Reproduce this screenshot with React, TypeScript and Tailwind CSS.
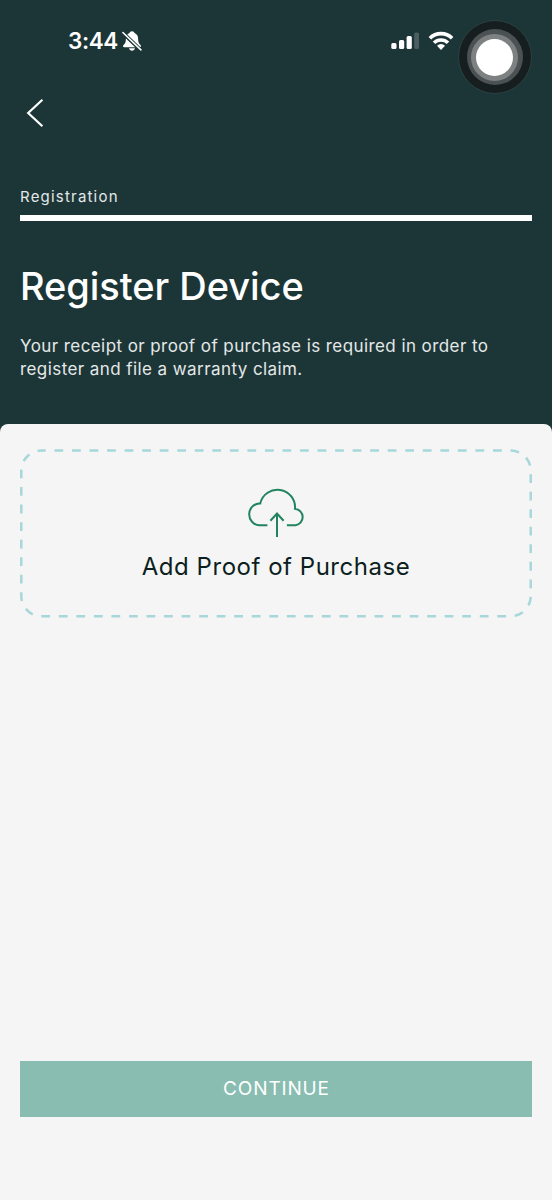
import React from 'react';

const SignalIcon = () => (
  <svg width="28" height="18" viewBox="0 0 28 18" fill="#fff">
    <rect x="0.3" y="11" width="5.2" height="6" rx="1.5" />
    <rect x="8" y="8" width="5.2" height="9" rx="1.5" />
    <rect x="15.6" y="4" width="5.2" height="13" rx="1.5" />
    <rect x="23.2" y="0.5" width="4.8" height="16.5" rx="1.5" fill="#4b5f60" />
  </svg>
);

const WifiIcon = () => (
  <svg width="26" height="20" viewBox="0 0 26 20" fill="none" stroke="#fff" strokeWidth="3.6">
    <path d="M1.9 7.2a15.8 15.8 0 0 1 22.2 0" />
    <path d="M6 11.8a10 10 0 0 1 14 0" />
    <path d="M13 19l-4-4.3a5.8 5.8 0 0 1 8 0z" fill="#fff" stroke="none" />
  </svg>
);

const BellOffIcon = () => (
  <svg width="22" height="22" viewBox="0 0 22 22">
    <path
      d="M11 1.2c-1.4 0-2.3.8-2.5 1.9C6 4 4.900 6.200 4.900 8.800c0 3.700-.9 4.900-2.400 6.200-.9.8-.5 2.200.8 2.200h15.400c1.300 0 1.700-1.400.8-2.200-1.500-1.300-2.400-2.500-2.400-6.200 0-2.600-1.100-4.800-3.600-5.700C13.300 2 12.400 1.200 11 1.200z"
      fill="#fff"
    />
    <path d="M8 18.300h6c-.3 1.500-1.500 2.400-3 2.400s-2.700-.9-3-2.400z" fill="#fff" />
    <path d="M1.6 2.6l18.2 17.600" stroke="#1c3637" strokeWidth="3.8" />
    <path d="M1.9 2.5l18 17.400" stroke="#fff" strokeWidth="1.6" strokeLinecap="round" />
  </svg>
);

const CloudUploadIcon = () => (
  <svg width="58" height="50" viewBox="0 0 58 50" fill="none" stroke="#21845f" strokeWidth="2">
    <path d="M20.400 38.300h-8.300a11 11 0 0 1 0-21.900h1.200a17.600 17.600 0 0 1 34.700 5.400a8.300 8.300 0 0 1 .5 16.500h-8.600" />
    <path d="M30 50V26.400M23.400 33.700l6.600-7.200 6.600 7.200" />
  </svg>
);

const StatusBar = () => (
  <div className="flex h-[82px] items-start justify-between pt-[28px] pr-[98px] pl-[68px] text-white">
    <div className="flex h-[26px] items-center gap-1">
      <span className="w-[49px] text-[22.5px] leading-[26px] font-semibold tracking-[-0.4px] whitespace-nowrap">3:44</span>
      <BellOffIcon />
    </div>
    <div className="flex h-[26px] items-center gap-[9px]">
      <SignalIcon />
      <WifiIcon />
    </div>
  </div>
);

const AssistiveTouch = () => (
  <div className="absolute top-[20px] left-[457.5px] flex size-[74px] items-center justify-center rounded-full border border-[#2c4142] bg-[#161e1f]">
    <div className="flex size-[56px] items-center justify-center rounded-full bg-[#4c5253]">
      <div className="flex size-[47px] items-center justify-center rounded-full bg-[#7d8182]">
        <div className="size-[37px] rounded-full bg-white" />
      </div>
    </div>
  </div>
);

export default function App() {
  return (
    <div className="relative flex h-[1200px] w-[552px] flex-col overflow-hidden bg-[#1c3637] font-['Inter','Liberation_Sans',sans-serif]">
      <header className="flex h-[424px] flex-col">
        <StatusBar />
        <button className="mt-[16px] ml-[26px] h-[30px] w-[18px]" aria-label="Back">
          <svg width="18" height="30" viewBox="0 0 18 30" fill="none" stroke="#fff" strokeWidth="2.2">
            <path d="M16.4 1.8L2.2 15l14.2 13.2" />
          </svg>
        </button>
        <div className="mt-[59px] px-5">
          <p className="text-[15px] leading-[20px] tracking-[1.2px] text-[#e4e8e8]">Registration</p>
          <div className="mt-[8px] h-[6px] bg-white" />
        </div>
        <h1 className="mt-[41px] px-5 text-[38px] leading-[48px] font-medium tracking-[-0.05px] text-white">Register Device</h1>
        <p className="mt-[25px] px-5 text-[17px] leading-[23px] tracking-[0.42px] whitespace-nowrap text-[#e4e8e8]">
          Your receipt or proof of purchase is required in order to
          <br />
          register and file a warranty claim.
        </p>
      </header>

      <main className="flex flex-1 flex-col rounded-t-[8px] bg-[#f5f5f5] px-5 pt-[25px]">
        <button className="grid h-[169px] w-full">
          <svg className="col-start-1 row-start-1" width="512" height="169" fill="none">
            <rect
              x="1.3"
              y="1.5"
              width="509.4"
              height="165.7"
              rx="20"
              stroke="#a7d7d9"
              strokeWidth="2.5"
              strokeDasharray="8.77 8.77"
              strokeDashoffset="4.38"
            />
          </svg>
          <span className="col-start-1 row-start-1 flex flex-col items-center pt-[38px]">
            <CloudUploadIcon />
            <span className="mt-[14px] text-[24px] leading-[32px] tracking-[0.53px] whitespace-nowrap text-[#0b1f20]">
              Add Proof of Purchase
            </span>
          </span>
        </button>

        <button className="mt-auto mb-[83px] h-[56px] w-full bg-[#8abdb1] pt-px pl-px text-[19px] tracking-[0.85px] text-white">
          CONTINUE
        </button>
      </main>

      <AssistiveTouch />
    </div>
  );
}
